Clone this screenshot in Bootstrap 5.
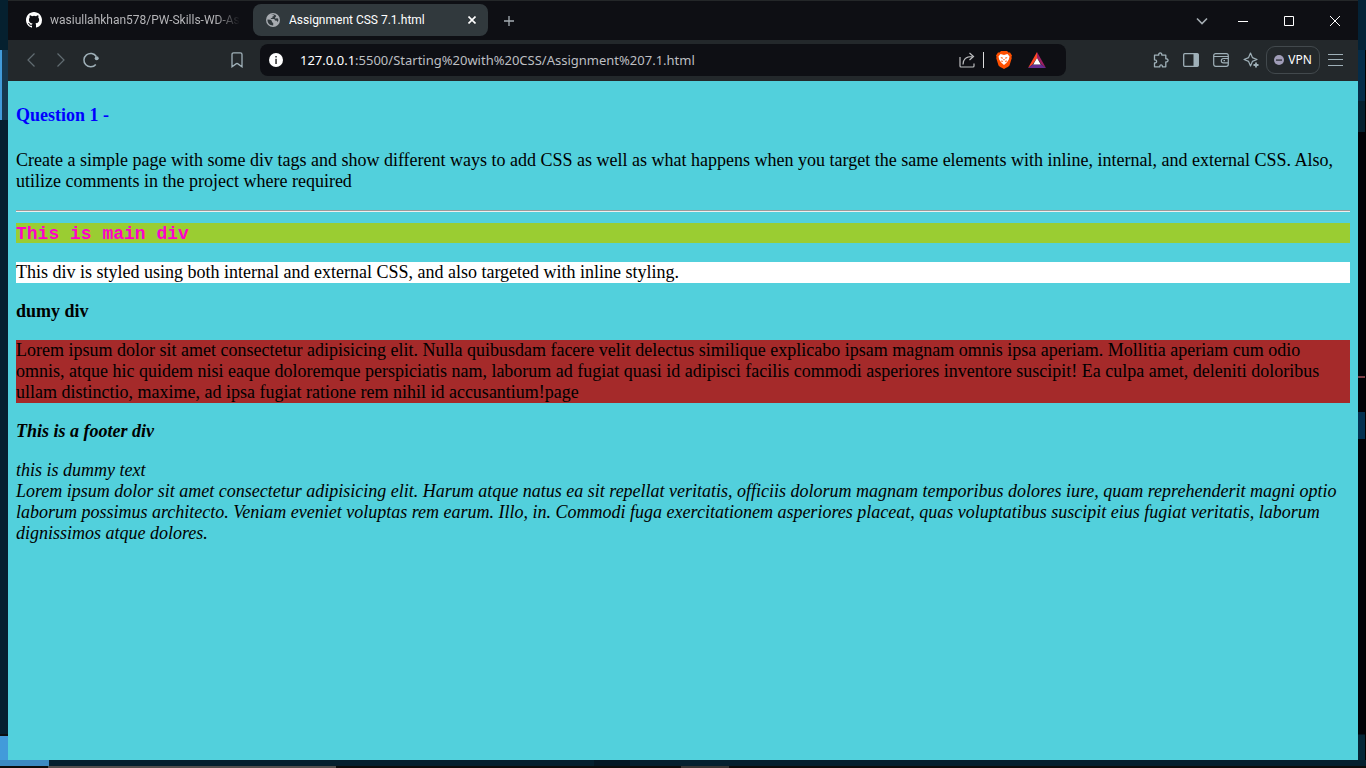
<!DOCTYPE html>
<html lang="en">
<head>
<meta charset="utf-8">
<meta name="viewport" content="width=device-width, initial-scale=1">
<title>Assignment CSS 7.1.html</title>
<link href="https://cdn.jsdelivr.net/npm/bootstrap@5.3.0/dist/css/bootstrap.min.css" rel="stylesheet">
<style>
  body { background: #05202f; font-family: "Noto Sans", sans-serif; font-size: 12px; }
  svg { display: block; fill: none; stroke: currentColor; }
  svg.solid { stroke: none; }
  button { color: inherit; }
  .plain-btn { background: none; border: 0; padding: 0; display: flex; align-items: center; justify-content: center; flex: none; }

  /* desktop seen around the window */
  .edge { width: 8px; flex: none; }
  .edge-left { background:
    linear-gradient(#429bda, #429bda) 0 50px / 2px 70px no-repeat,
    linear-gradient(#05202f 50px, #16384f 50px, #16384f 120px, #05202f 120px, #05202f calc(100% - 26px), #0c0f10 calc(100% - 26px), #0c0f10 calc(100% - 24px), #429bda calc(100% - 24px)); }
  .edge-right { background:
    linear-gradient(#000, #000) 7px 50px / 1px 100% no-repeat,
    linear-gradient(#042236 50px, #052c48 50px, #052c48 101px, #05202f 101px, #05202f 132px, #010106 132px, #010106 376px, #7a3c44 376px, #7a3c44 378px, #010106 378px, #010106 412px, #023050 412px, #023050 439px, #010106 439px, #010106 calc(100% - 26px), #052536 calc(100% - 25px)); }
  .under-window { height: 6px; background: linear-gradient(90deg, #3c8ac2 49px, #05202f 49px, #05202f 594px, #041724 594px, #041724 630px, #05202f 630px); }
  .taskbar-top { height: 2px; background: linear-gradient(90deg, #0e0c0b 48px, #55504e 48px, #55504e 336px, #0e0c0b 336px, #0e0c0b 681px, #3a3533 681px, #3a3533 729px, #0e0c0b 729px); }

  .title-strip { height: 40px; background: #0e0f14; border-top: 1px solid #242729; padding-left: 8px; color: #a5adb3; }
  .tab-item { height: 32px; border-radius: 8px; margin-top: 3px; color: #b5b5b8; }
  .tab-item.current { background: #31393d; color: #fff; width: 235px; }
  .tab-item.back { width: 237px; padding-left: 10px; }
  .tab-item.back .tab-name { width: 190px; -webkit-mask-image: linear-gradient(90deg, #000 165px, transparent 190px); mask-image: linear-gradient(90deg, #000 165px, transparent 190px); }
  .tab-name { font-size: 12px; line-height: 16px; overflow: hidden; white-space: nowrap; font-family: Roboto, sans-serif; }
  .caption-btn { width: 46px; height: 39px; color: #fff; }

  .tool-strip { height: 41px; padding-bottom: 1px; background: #23282b; color: #9fb0b8; }
  .tool-btn { width: 30px; height: 32px; }
  .reload { margin-right: 36px; }
  .address { background: #0e0f14; border-radius: 8px; height: 32px; width: 806px; margin-left: 8px; }
  .address-text { font-size: 13px; line-height: 20px; color: #bdbfc2; white-space: nowrap; text-decoration: none; font-family: "Noto Sans", sans-serif; }
  .address-text span { color: #fff; }
  .vpn { width: 54px; height: 28px; border: 1px solid #42494d; border-radius: 9px; color: #fff; font-size: 12px; gap: 4px; }

  .doc { background: #52d0dc; color: #000; padding: 24px 8px; font-family: "Liberation Serif", serif; font-size: 18px; line-height: 21px; }
  .doc h1, .doc h2 { font-size: 18px; line-height: 21px; font-weight: 700; margin: 0 0 18px; }
  .doc .question { color: #00f; margin-bottom: 24px; }
  .doc p { margin: 0 0 18px; }
  .doc hr { opacity: 1; border: 0; border-top: 1px solid #9a9a9a; border-bottom: 1px solid #eee; margin: 0 0 11px; height: 2px; }
  .main-line { background: #9acd32; color: #ff00c8; font-family: "Liberation Mono", monospace; font-weight: 700; line-height: 18px; padding-top: 2px; margin-bottom: 19px; }
  .brown { background: #a52a2a; }
</style>
</head>
<body class="min-vh-100 d-flex flex-column overflow-hidden">
<div class="d-flex flex-grow-1">
  <div class="edge edge-left"></div>
  <main class="flex-grow-1 d-flex flex-column">
    <header class="title-strip d-flex">
      <div class="tab-item back d-flex align-items-center">
        <svg width="16" height="16" viewBox="0 0 16 16" class="solid flex-shrink-0 me-2"><path fill="#fff" d="M8 0C3.58 0 0 3.58 0 8c0 3.54 2.29 6.53 5.47 7.59.4.07.55-.17.55-.38 0-.19-.01-.82-.01-1.49-2.01.37-2.53-.49-2.69-.94-.09-.23-.48-.94-.82-1.13-.28-.15-.68-.52-.01-.53.63-.01 1.08.58 1.23.82.72 1.21 1.87.87 2.33.66.07-.52.28-.87.51-1.07-1.78-.2-3.64-.89-3.64-3.95 0-.87.31-1.59.82-2.15-.08-.2-.36-1.02.08-2.12 0 0 .67-.21 2.2.82a7.6 7.6 0 0 1 4 0c1.53-1.04 2.2-.82 2.2-.82.44 1.1.16 1.92.08 2.12.51.56.82 1.27.82 2.15 0 3.07-1.87 3.75-3.65 3.95.29.25.54.73.54 1.48 0 1.07-.01 1.93-.01 2.2 0 .21.15.46.55.38A8 8 0 0 0 16 8c0-4.42-3.58-8-8-8z"/></svg>
        <span class="tab-name">wasiullahkhan578/PW-Skills-WD-Assignment</span>
      </div>
      <div class="tab-item current d-flex align-items-center ps-2">
        <svg width="16" height="14" viewBox="-1 0 16 14" class="solid ms-1 me-2 flex-shrink-0"><circle cx="7" cy="7" r="7" fill="#a7abb0"/><path fill="#31393d" d="M1.500 6.500l3 .2 1.500 1.200-.2 1.200 1.400 1v2.300C3.500 12.500 1.200 9.800 1.500 6.500zM5 1.900L8.200 1.500 7.500 3.300 6.400 3.600 6.500 4.800 4.800 5.200 4.900 6 8.300 6.100 9 7.500 11 7.700 11.200 9.300 12.400 7.500 12.100 5.600 10.700 5.300 9.600 5.700 9 4.700 10.300 3.100 9 1.800z"/></svg>
        <span class="tab-name flex-grow-1">Assignment CSS 7.1.html</span>
        <button class="plain-btn me-2 pe-1" aria-label="Close tab"><svg width="8" height="8" viewBox="0 0 8 8" stroke-width="1.600"><path d="M.5.5l7 7M7.500.5l-7 7"/></svg></button>
      </div>
      <button class="plain-btn ms-3" aria-label="New tab"><svg width="10" height="10" viewBox="0 0 10 10" stroke-width="1.300"><path d="M5 0v10M0 5h10"/></svg></button>
      <div class="ms-auto d-flex">
        <button class="plain-btn me-2 pe-1" aria-label="Search tabs"><svg width="12" height="8" viewBox="0 0 12 8" stroke-width="1.600"><path d="M1 1.500l5 5 5-5"/></svg></button>
        <button class="plain-btn caption-btn" aria-label="Minimize"><svg width="10" height="10" viewBox="0 0 10 10"><path d="M0 5.500h10"/></svg></button>
        <button class="plain-btn caption-btn" aria-label="Maximize"><svg width="10" height="10" viewBox="0 0 10 10"><path d="M.5.5h9v9h-9z"/></svg></button>
        <button class="plain-btn caption-btn" aria-label="Close"><svg width="10" height="10" viewBox="0 0 10 10"><path d="M0 0l10 10M10 0L0 10"/></svg></button>
      </div>
    </header>

    <nav class="tool-strip d-flex align-items-center ps-2">
      <button class="plain-btn tool-btn opacity-50" aria-label="Back"><svg width="8" height="14" viewBox="0 0 8 14" stroke-width="1.200"><path d="M7.500.5L1 7l6.500 6.500"/></svg></button>
      <button class="plain-btn tool-btn opacity-50" aria-label="Forward"><svg width="8" height="14" viewBox="0 0 8 14" stroke-width="1.200"><path d="M.5.5L7 7 .5 13.500"/></svg></button>
      <button class="plain-btn tool-btn reload" aria-label="Reload"><svg width="16" height="16" viewBox="0 0 16 16" stroke-width="1.500"><path d="M12.800 12.400A6.700 6.700 0 1 1 13.300 4.500"/><circle cx="13.700" cy="6.300" r="2" fill="currentColor" stroke="none"/></svg></button>
      <button class="plain-btn tool-btn ms-auto" aria-label="Bookmark"><svg width="12" height="16" viewBox="0 0 12 16" stroke-width="1.300"><path d="M1 2.500Q1 .8 2.600.8h6.800Q11 .8 11 2.500V14.800L6.600 11.600Q6 11.200 5.400 11.600L1 14.800z"/></svg></button>
      <div class="address d-flex align-items-center">
        <button class="plain-btn ms-2" aria-label="Site information"><svg class="solid" width="16" height="16" viewBox="0 0 16 16"><circle cx="8" cy="8" r="7" fill="#fff"/><path fill="#444" d="M7.200 4h1.700v1.600H7.200zM7.200 6.800h1.700V12H7.200z"/></svg></button>
        <a class="address-text ms-3" href="http://127.0.0.1:5500/"><span>127.0.0.1</span>:5500/Starting%20with%20CSS/Assignment%207.1.html</a>
        <div class="ms-auto d-flex align-items-center">
          <button class="plain-btn text-light opacity-75" aria-label="Share"><svg width="16" height="16" viewBox="0 0 16 16" stroke-width="1.200"><path d="M1 5v9q0 1 1 1h12q1 0 1-1v-2.500M4 12.500C4 7.500 6.500 4.500 13.500 4.500M10.500 1l4 3.500-4 3.500"/></svg></button>
          <svg class="mx-2" width="1" height="16" viewBox="0 0 1 16"><path d="M.5 0v16" stroke="#ddd"/></svg>
          <button class="plain-btn ms-1" aria-label="Shields"><svg class="solid" width="16" height="18" viewBox="0 0 16 18"><path fill="#ff5000" d="M5 0h6l1.500 1.500H14L16 4.500l-.6 1.500.4 1-2.300 7.500Q13 15.500 8 18 3 15.500 2.500 14.500L.2 7l.4-1L0 4.500 2 1.500h1.500z"/><path fill="#fff" d="M4.500 3L8 4l3.500-1L13.500 5.500 12.800 8.500 11 11.200 10 12.300 8 14 6 12.300 5 11.200 3.200 8.500 2.500 5.500z"/><path fill="#ff5000" d="M4.500 6l2.500.8L7 7.600H5.500zM11.500 6L9 6.800l0 .8h1.500zM6 9.500l1 .8-1 1L5 9.800zM10 9.500l-1 .8 1 1 1-1.500zM7.200 8h1.600L8 9.800z"/></svg></button>
          <button class="plain-btn ms-3 me-3 pe-1" aria-label="Rewards"><svg class="solid" width="18" height="16" viewBox="0 0 18 16"><path fill="#ff4724" d="M9 0v6L4.500 12.500 0 16z"/><path fill="#9e1f63" d="M9 0l9 16-4.500-3.500L9 6z"/><path fill="#662d91" d="M0 16l4.500-3.500h9L18 16z"/><path fill="#fff" d="M9 6l3.800 6.500H5.200z"/></svg></button>
        </div>
      </div>
      <div class="ms-auto d-flex align-items-center pe-2">
        <button class="plain-btn tool-btn" aria-label="Extensions"><svg width="16" height="16" viewBox="0 0 16 16" stroke-width="1.300"><path d="M1.500 3.200h4.200C5.300.2 9.200.2 8.800 3.200h4V6.800c3-.4 3 3.500 0 3.100V14.800H9.400c.4-2.600-3-2.600-2.600 0H1.500V11c2.800.3 2.800-3.500 0-3.100z" stroke-linejoin="round"/></svg></button>
        <button class="plain-btn tool-btn" aria-label="Sidebar"><svg width="16" height="14" viewBox="0 0 16 14" stroke-width="1.300"><rect x=".7" y=".7" width="14.600" height="12.600" rx="1"/><path fill="currentColor" stroke="none" d="M10.500 1h5v12h-5z"/></svg></button>
        <button class="plain-btn tool-btn" aria-label="Wallet"><svg width="16" height="14" viewBox="0 0 16 14" stroke-width="1.200"><rect x=".7" y=".7" width="14.600" height="12.600" rx="2"/><path d="M1 3.500h14M15 5.500h-4.500a2.200 2.200 0 0 0 0 4.400H15M10.500 7.700h1.500"/></svg></button>
        <button class="plain-btn tool-btn" aria-label="Leo AI"><svg width="16" height="16" viewBox="0 0 16 16" stroke-width="1.200" stroke-linejoin="round"><path d="M7.500 1l1.900 4.600L14 7.500 9.400 9.400 7.500 14 5.600 9.400 1 7.500l4.600-1.900z"/><path d="M13 10.500v5M10.500 13h5" stroke-width="1.800"/></svg></button>
        <button class="plain-btn vpn"><svg class="solid" width="10" height="10" viewBox="0 0 10 10"><circle cx="5" cy="5" r="5" fill="#a09db8"/><path fill="#34363f" d="M2 4.400h6v1.400H2z"/></svg>VPN</button>
        <button class="plain-btn tool-btn" aria-label="Menu"><svg width="15" height="12" viewBox="0 0 15 12"><path d="M0 .5h15M0 5.500h15M0 11.500h15"/></svg></button>
      </div>
    </nav>

    <article class="doc flex-grow-1">
      <h1 class="question">Question 1 -</h1>
      <p>Create a simple page with some div tags and show different ways to add CSS as well as what happens when you target the same elements with inline, internal, and external CSS. Also, utilize comments in the project where required</p>
      <hr>
      <div class="main-line">This is main div</div>
      <p class="bg-white">This div is styled using both internal and external CSS, and also targeted with inline styling.</p>
      <h2>dumy div</h2>
      <p class="brown">Lorem ipsum dolor sit amet consectetur adipisicing elit. Nulla quibusdam facere velit delectus similique explicabo ipsam magnam omnis ipsa aperiam. Mollitia aperiam cum odio omnis, atque hic quidem nisi eaque doloremque perspiciatis nam, laborum ad fugiat quasi id adipisci facilis commodi asperiores inventore suscipit! Ea culpa amet, deleniti doloribus ullam distinctio, maxime, ad ipsa fugiat ratione rem nihil id accusantium!page</p>
      <footer class="fst-italic">
        <h2>This is a footer div</h2>
        <div>this is dummy text</div>
        <div>Lorem ipsum dolor sit amet consectetur adipisicing elit. Harum atque natus ea sit repellat veritatis, officiis dolorum magnam temporibus dolores iure, quam reprehenderit magni optio laborum possimus architecto. Veniam eveniet voluptas rem earum. Illo, in. Commodi fuga exercitationem asperiores placeat, quas voluptatibus suscipit eius fugiat veritatis, laborum dignissimos atque dolores.</div>
      </footer>
    </article>
  </main>
  <div class="edge edge-right"></div>
</div>
<div class="under-window"></div>
<div class="taskbar-top"></div>
<script src="https://cdn.jsdelivr.net/npm/bootstrap@5.3.0/dist/js/bootstrap.bundle.min.js"></script>
</body>
</html>
